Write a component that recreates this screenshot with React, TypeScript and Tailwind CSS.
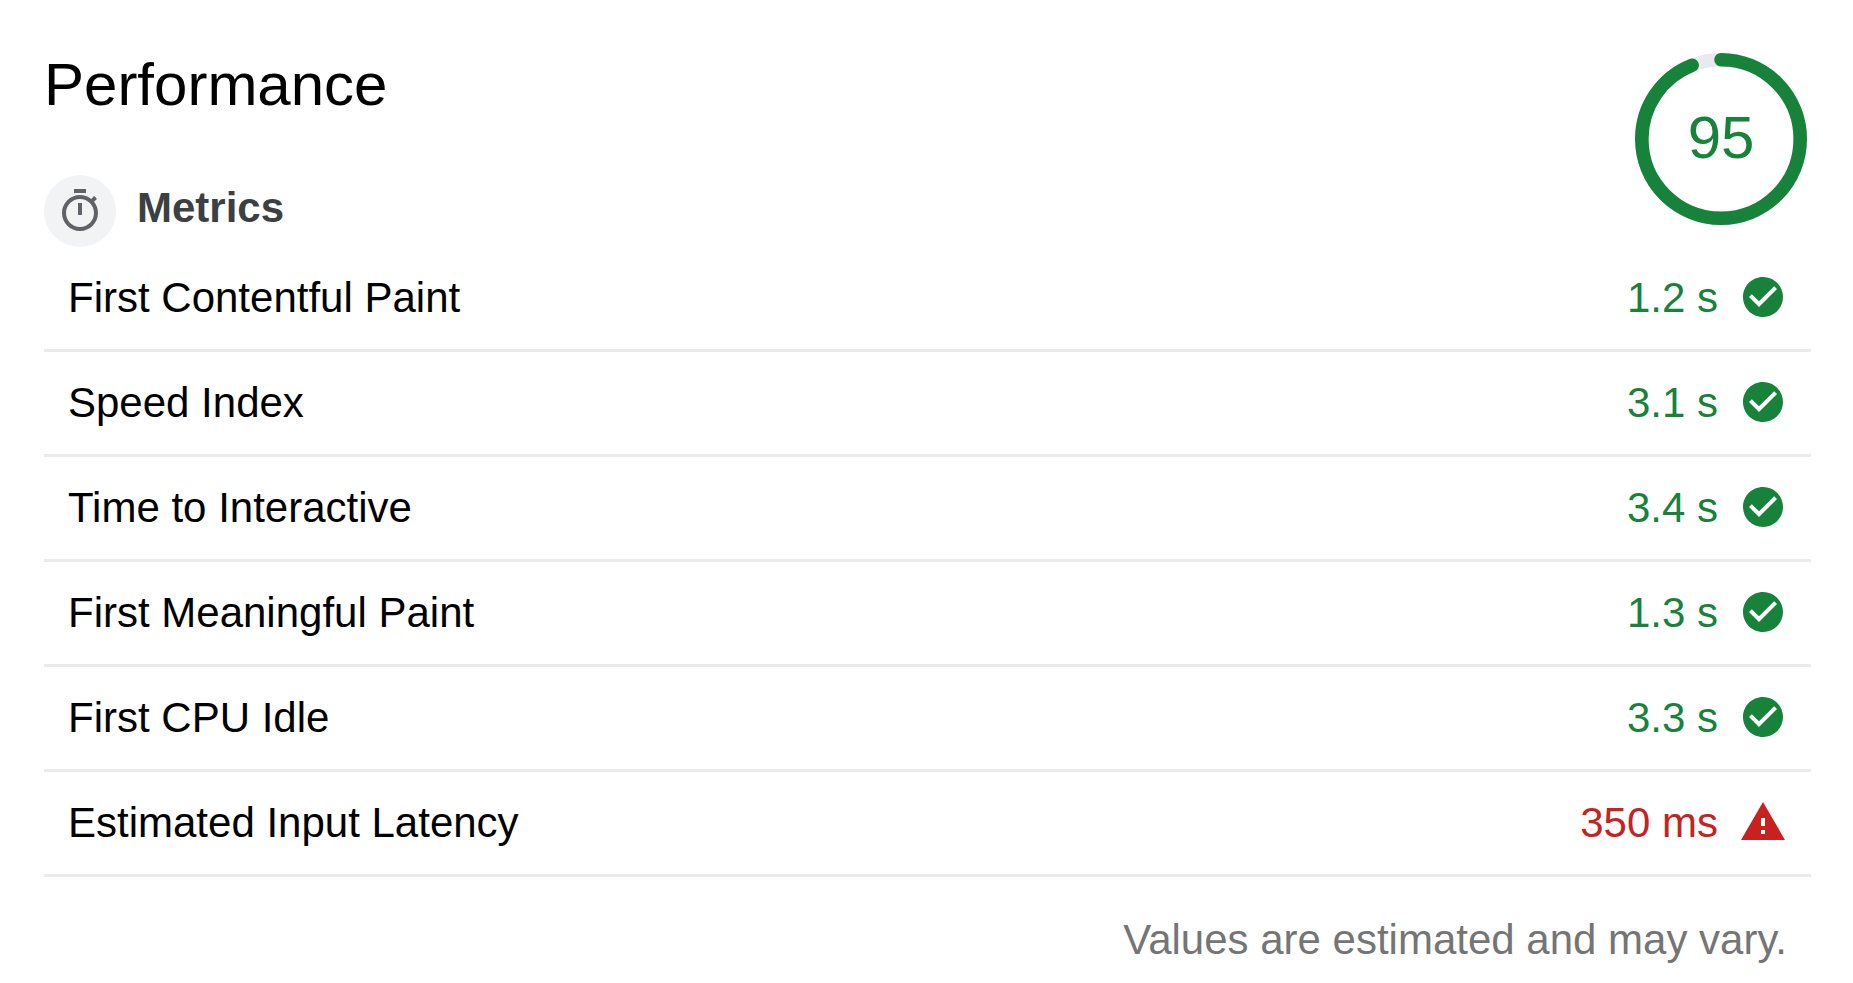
type Status = 'pass' | 'fail';

interface Metric {
  name: string;
  value: string;
  status: Status;
}

const metrics: Metric[] = [
  { name: 'First Contentful Paint', value: '1.2 s', status: 'pass' },
  { name: 'Speed Index', value: '3.1 s', status: 'pass' },
  { name: 'Time to Interactive', value: '3.4 s', status: 'pass' },
  { name: 'First Meaningful Paint', value: '1.3 s', status: 'pass' },
  { name: 'First CPU Idle', value: '3.3 s', status: 'pass' },
  { name: 'Estimated Input Latency', value: '350 ms', status: 'fail' },
];

function StopwatchIcon() {
  return (
    <svg viewBox="0 0 24 24" className="size-12 fill-[#5f6368]" aria-hidden="true">
      <path d="M15 1H9v2h6V1zm-4 13h2V8h-2v6zm8.03-6.61l1.42-1.42c-.43-.51-.9-.99-1.41-1.41l-1.42 1.42C16.07 4.74 14.12 4 12 4c-4.97 0-9 4.03-9 9s4.02 9 9 9 9-4.03 9-9c0-2.12-.74-4.07-1.97-5.61zM12 20c-3.87 0-7-3.13-7-7s3.13-7 7-7 7 3.13 7 7-3.13 7-7 7z" />
    </svg>
  );
}

function StatusIcon({ status }: { status: Status }) {
  return (
    <svg
      viewBox="0 0 24 24"
      className="mb-0.5 size-12 shrink-0 fill-current"
      role="img"
      aria-label={status === 'pass' ? 'Passed' : 'Failed'}
    >
      {status === 'pass' ? (
        <path d="M12 2C6.48 2 2 6.48 2 12s4.48 10 10 10 10-4.48 10-10S17.52 2 12 2zm-2 15l-5-5 1.41-1.41L10 14.17l7.59-7.59L19 8l-9 9z" />
      ) : (
        <path d="M1 21h22L12 2 1 21zm12-3h-2v-2h2v2zm0-4h-2v-4h2v4z" />
      )}
    </svg>
  );
}

function Gauge({ score }: { score: number }) {
  return (
    <div className="mr-1 mt-[3px] grid shrink-0 place-items-center text-[#178239]">
      <svg viewBox="0 0 172 172" className="col-start-1 row-start-1 size-[172px]" aria-hidden="true">
        <circle cx="86" cy="86" r="79.2" fill="none" stroke="#e8eaed" strokeWidth="13.6" />
        <circle
          cx="86"
          cy="86"
          r="79.2"
          fill="none"
          stroke="currentColor"
          strokeWidth="13.6"
          strokeLinecap="round"
          pathLength="100"
          strokeDasharray={`${score * 0.99} 100`}
          transform="rotate(-90 86 86)"
        />
      </svg>
      <span className="col-start-1 row-start-1 pb-0.5 text-[60px] leading-[68px]">{score}</span>
    </div>
  );
}

export default function App() {
  return (
    <main className="min-h-screen bg-white pb-5 pl-11 pr-[42px] pt-[50px] font-['Liberation_Sans',Arial,sans-serif] text-[42px] leading-[48px] text-black">
      <header className="flex items-start justify-between">
        <div>
          <h1 className="text-[60px] leading-[70px]">Performance</h1>
          <div className="mt-[55px] flex items-start gap-[21px]">
            <div className="grid size-[72px] place-items-center rounded-full bg-[#f1f3f4]">
              <StopwatchIcon />
            </div>
            <h2 id="metrics-title" className="font-bold leading-[66px] text-[#3c4043]">
              Metrics
            </h2>
          </div>
        </div>
        <Gauge score={95} />
      </header>

      <table aria-labelledby="metrics-title" className="w-full border-separate border-spacing-0">
        <tbody>
          {metrics.map((metric) => (
            <tr key={metric.name}>
              <th
                scope="row"
                className="h-[105px] border-b-[3px] border-[#ebebeb] p-0 pl-6 text-left align-middle font-normal"
              >
                {metric.name}
              </th>
              <td className="h-[105px] border-b-[3px] border-[#ebebeb] p-0 pr-6 align-middle">
                <div
                  className={
                    metric.status === 'pass'
                      ? 'flex items-center justify-end gap-[21px] text-[#178239]'
                      : 'flex items-center justify-end gap-[21px] text-[#c7221f]'
                  }
                >
                  <span>{metric.value}</span>
                  <StatusIcon status={metric.status} />
                </div>
              </td>
            </tr>
          ))}
        </tbody>
      </table>

      <p className="mt-[39px] pr-6 text-right text-[#757575]">Values are estimated and may vary.</p>
    </main>
  );
}
